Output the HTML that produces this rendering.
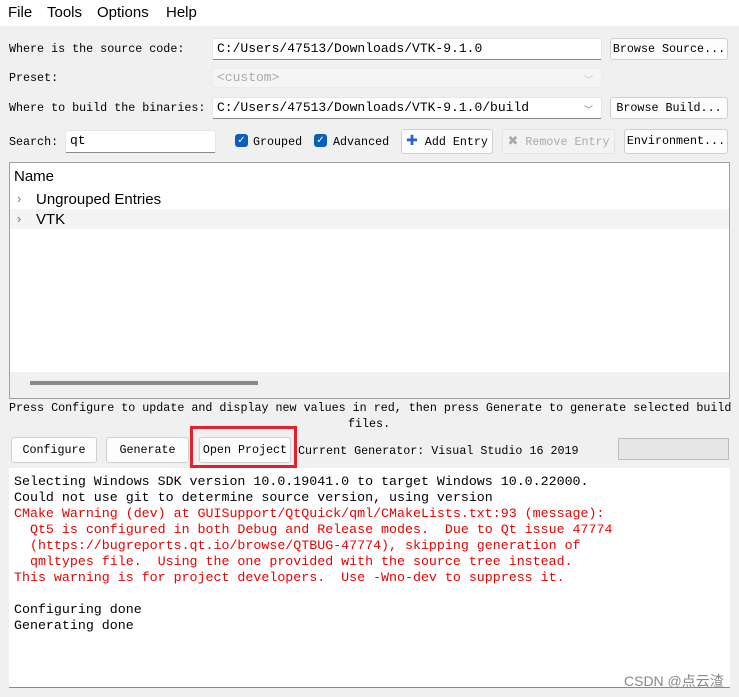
<!DOCTYPE html>
<html><head><meta charset="utf-8"><style>
*{box-sizing:border-box;margin:0;padding:0}
body{width:739px;height:697px;background:#f0f0f0;position:relative;overflow:hidden;font-family:"Liberation Mono",monospace;font-size:11.7px;color:#000}
.a{position:absolute;white-space:pre}
.menu{position:absolute;left:0;top:0;width:739px;height:26px;background:#fff;font-family:"Liberation Sans",sans-serif;font-size:15px}
.menu span{position:absolute;top:4px}
.in{position:absolute;background:#fff;border:1px solid #e5e5e5;border-bottom:1px solid #8a8a8a;border-radius:2px;padding-left:4px;line-height:20px;font-size:13px;white-space:pre}
.btn{position:absolute;background:#fdfdfd;border:1px solid #d0d0d0;border-radius:3px;text-align:center;font-size:11.7px;white-space:pre}
.cb{position:absolute;width:13px;height:13px;background:#0a5fbe;border-radius:3px;color:#fff;font-size:10px;line-height:13px;text-align:center;font-family:"DejaVu Sans",sans-serif}
.chev{position:absolute;right:8px;color:#777;font-size:9px;font-family:"DejaVu Sans",sans-serif}
.sans{font-family:"Liberation Sans",sans-serif;font-size:15px}
.log{position:absolute;left:9px;top:468px;width:721px;height:220px;background:#fff;border-bottom:1px solid #888;font-size:13.3px;line-height:16px;padding:6px 0 0 5px;white-space:pre}
.r{color:#e00}
</style></head><body>
<div class="menu"><span style="left:8px">File</span><span style="left:47px">Tools</span><span style="left:97px">Options</span><span style="left:166px">Help</span></div>

<div class="a" style="left:9px;top:42px">Where is the source code:</div>
<div class="in" style="left:212px;top:38px;width:390px;height:22px">C:/Users/47513/Downloads/VTK-9.1.0</div>
<div class="btn" style="left:610px;top:38px;width:118px;height:22px;line-height:20px">Browse Source...</div>

<div class="a" style="left:9px;top:71px">Preset:</div>
<div class="in" style="left:212px;top:68px;width:390px;height:20px;background:#f5f5f5;border:1px solid #ececec;color:#aaa;line-height:18px">&lt;custom&gt;<span class="chev" style="top:3px;color:#bbb">﹀</span></div>

<div class="a" style="left:9px;top:101px">Where to build the binaries:</div>
<div class="in" style="left:212px;top:97px;width:390px;height:22px">C:/Users/47513/Downloads/VTK-9.1.0/build<span class="chev" style="top:3px">﹀</span></div>
<div class="btn" style="left:610px;top:97px;width:118px;height:22px;line-height:20px">Browse Build...</div>

<div class="a" style="left:9px;top:135px">Search:</div>
<div class="in" style="left:65px;top:130px;width:151px;height:23px">qt</div>
<div class="cb" style="left:235px;top:134px">✓</div><div class="a" style="left:253px;top:135px">Grouped</div>
<div class="cb" style="left:314px;top:134px">✓</div><div class="a" style="left:333px;top:135px">Advanced</div>
<div class="btn" style="left:401px;top:129px;width:92px;height:25px;line-height:23px"><span style="color:#2a62d8;font-weight:bold;font-family:'DejaVu Sans';font-size:14px">✚</span> Add Entry</div>
<div class="btn" style="left:502px;top:129px;width:113px;height:25px;line-height:23px;color:#aaa;background:#f3f3f3;border-color:#e2e2e2"><span style="font-family:'DejaVu Sans';font-size:13px">✖</span> Remove Entry</div>
<div class="btn" style="left:624px;top:129px;width:104px;height:25px;line-height:23px">Environment...</div>

<div style="position:absolute;left:9px;top:162px;width:721px;height:237px;background:#fff;border:1px solid #a0a0a0"></div>
<div class="a sans" style="left:14px;top:168px">Name</div>
<div style="position:absolute;left:10px;top:209px;width:719px;height:20px;background:#f4f4f4"></div>
<div class="a sans" style="left:17px;top:191px;color:#777;font-size:13px">›</div><div class="a sans" style="left:36px;top:191px">Ungrouped Entries</div>
<div class="a sans" style="left:17px;top:211px;color:#777;font-size:13px">›</div><div class="a sans" style="left:36px;top:211px">VTK</div>
<div style="position:absolute;left:10px;top:372px;width:719px;height:26px;background:#f0f0f0"></div>
<div style="position:absolute;left:30px;top:381px;width:228px;height:4px;background:#888"></div>

<div class="a" style="left:9px;top:401px">Press Configure to update and display new values in red, then press Generate to generate selected build</div>
<div class="a" style="left:348px;top:417px">files.</div>

<div class="btn" style="left:11px;top:437px;width:86px;height:26px;line-height:24px">Configure</div>
<div class="btn" style="left:106px;top:437px;width:83px;height:26px;line-height:24px">Generate</div>
<div class="btn" style="left:199px;top:437px;width:92px;height:26px;line-height:24px">Open Project</div>
<div style="position:absolute;left:190px;top:426px;width:107px;height:42px;border:3px solid #e5202a"></div>
<div class="a" style="left:298px;top:444px">Current Generator: Visual Studio 16 2019</div>
<div style="position:absolute;left:618px;top:438px;width:111px;height:22px;background:#e6e6e6;border:1px solid #bcbcbc"></div>

<div class="log">Selecting Windows SDK version 10.0.19041.0 to target Windows 10.0.22000.
Could not use git to determine source version, using version
<span class="r">CMake Warning (dev) at GUISupport/QtQuick/qml/CMakeLists.txt:93 (message):
  Qt5 is configured in both Debug and Release modes.  Due to Qt issue 47774
  (https://bugreports.qt.io/browse/QTBUG-47774), skipping generation of
  qmltypes file.  Using the one provided with the source tree instead.
This warning is for project developers.  Use -Wno-dev to suppress it.</span>

Configuring done
Generating done</div>
<div class="a" style="left:624px;top:671px;font-family:'Liberation Sans','Noto Sans CJK SC',sans-serif;font-size:14px;color:#888">CSDN @点云渣</div>
</body></html>
